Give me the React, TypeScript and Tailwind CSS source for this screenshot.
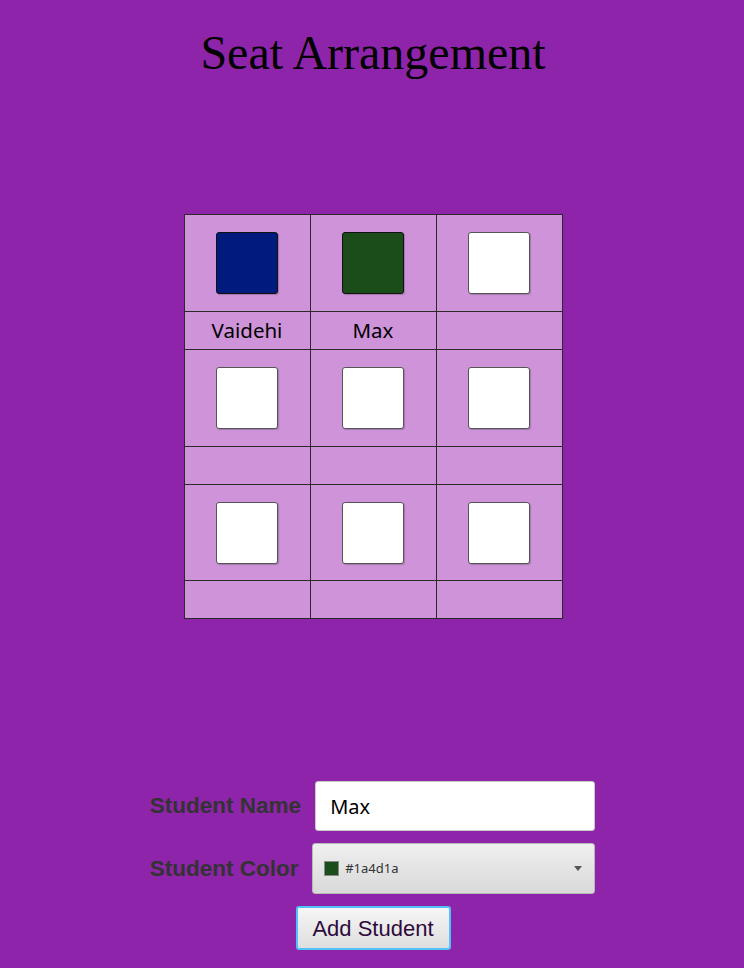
import React, { useState } from 'react';

type Seat = { name: string; color: string };

const initialSeats: Seat[] = [
  { name: 'Vaidehi', color: '#001a7e' },
  { name: 'Max', color: '#1a4d1a' },
  { name: '', color: '#ffffff' },
  { name: '', color: '#ffffff' },
  { name: '', color: '#ffffff' },
  { name: '', color: '#ffffff' },
  { name: '', color: '#ffffff' },
  { name: '', color: '#ffffff' },
  { name: '', color: '#ffffff' },
];

const rowHeights = ['h-[97px]', 'h-[97px]', 'h-[96px]'];

const App: React.FC = () => {
  const [seats] = useState<Seat[]>(initialSeats);
  const [name, setName] = useState('Max');
  const color = '#1a4d1a';

  const rows = [0, 1, 2].map((r) => seats.slice(r * 3, r * 3 + 3));

  return (
    <div className="min-h-[968px] w-full bg-[#8e24aa] flex flex-col items-center">
      <h1 className="pt-[26px] text-[48px] leading-[54px] text-black font-['Liberation_Serif',serif] ml-[2px]">
        Seat Arrangement
      </h1>

      {/* seat grid */}
      <div className="mt-[134px] ml-[2px] border-l border-t border-[#2a2a2a] bg-[#ce93d8]">
        {rows.map((row, r) => (
          <React.Fragment key={r}>
            <div className="flex">
              {row.map((seat, i) => (
                <div
                  key={i}
                  className={`w-[126px] ${rowHeights[r]} border-r border-b border-[#2a2a2a] flex items-center justify-center`}
                >
                  <div
                    className={`w-[62px] h-[62px] rounded-[3px] border ${
                      seat.color === '#ffffff' ? 'border-[#555]' : 'border-[#111]'
                    } shadow-[1px_1px_1px_rgba(0,0,0,0.2)]`}
                    style={{ backgroundColor: seat.color }}
                  />
                </div>
              ))}
            </div>
            <div className="flex">
              {row.map((seat, i) => (
                <div
                  key={i}
                  className="w-[126px] h-[38px] border-r border-b border-[#2a2a2a] flex items-center justify-center text-[20.5px] text-black font-['Noto_Sans',sans-serif]"
                >
                  {seat.name}
                </div>
              ))}
            </div>
          </React.Fragment>
        ))}
      </div>

      {/* form */}
      <div className="mt-[162px] grid grid-cols-[auto_auto] items-center gap-y-[12px] ml-[1px]">
        <label className="text-[22.5px] font-bold text-[#333] font-['Liberation_Sans',Arial,sans-serif] pr-[11px]">
          Student Name
        </label>
        <input
          value={name}
          onChange={(e) => setName(e.target.value)}
          className="ml-[3px] w-[280px] h-[50px] rounded-[3px] bg-white border border-[#c8c8c8] px-[14px] text-[20px] text-black font-['Noto_Sans',sans-serif] outline-none"
        />
        <label className="text-[22.5px] font-bold text-[#333] font-['Liberation_Sans',Arial,sans-serif] pr-[11px]">
          Student Color
        </label>
        <div className="w-[283px] h-[51px] rounded-[3px] border border-[#b8b8b8] bg-gradient-to-b from-[#efefef] to-[#d9d9d9] flex items-center pl-[11px] pr-[12px]">
          <span className="w-[15px] h-[15px] border border-[#888]" style={{ backgroundColor: color }} />
          <span className="ml-[6px] text-[13px] text-[#333] font-['Noto_Sans',sans-serif]">{color}</span>
          <span className="ml-auto w-0 h-0 border-l-[4px] border-r-[4px] border-t-[5px] border-l-transparent border-r-transparent border-t-[#555]" />
        </div>
      </div>
      <button className="mt-[12px] ml-[2px] w-[155px] h-[44px] rounded-[3px] border-2 border-[#4fc3f7] bg-gradient-to-b from-[#f6f6f6] to-[#dedede] text-[22px] text-[#2e0b3d] font-['Liberation_Sans',Arial,sans-serif]">
        Add Student
      </button>
    </div>
  );
};

export default App;
